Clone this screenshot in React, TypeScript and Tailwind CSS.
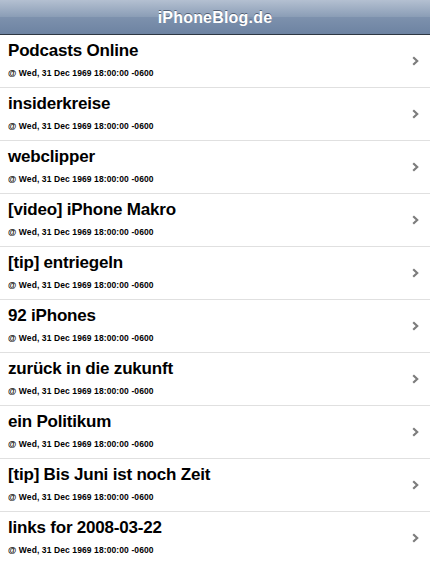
const POSTS = [
  'Podcasts Online',
  'insiderkreise',
  'webclipper',
  '[video] iPhone Makro',
  '[tip] entriegeln',
  '92 iPhones',
  'zurück in die zukunft',
  'ein Politikum',
  '[tip] Bis Juni ist noch Zeit',
  'links for 2008-03-22',
]

const DATE = '@ Wed, 31 Dec 1969 18:00:00 -0600'

function Chevron() {
  return (
    <svg width="7" height="10" viewBox="0 0 7 10" className="shrink-0">
      <path d="M1.2 1.2 L5.2 5 L1.2 8.8" fill="none" stroke="#7d7d7d" strokeWidth="2.2" />
    </svg>
  )
}

export default function App() {
  return (
    <div className="w-[430px] h-[561px] overflow-hidden bg-white font-['Liberation_Sans',Arial,sans-serif]">
      {/* title bar */}
      <div className="h-[35px] pt-[2px] flex items-center justify-center border-b border-[#2d3642] bg-[linear-gradient(#b4c0d1,#8a9db6_50%,#7d91ad_51%,#6d83a2)]">
        <span className="text-white font-bold text-[16px] leading-[20px] tracking-[0.2px] [text-shadow:0_-1px_0_rgba(40,50,70,0.6)]">
          iPhoneBlog.de
        </span>
      </div>

      <ul>
        {POSTS.map(title => (
          <li key={title} className="h-[53px] flex items-center border-b border-[#e0e0e0] pl-2 pr-[11px]">
            <div className="flex-1 min-w-0 self-start pt-[6px]">
              <div className="text-[17px] leading-[20px] font-bold text-black tracking-[-0.2px]">{title}</div>
              <div className="mt-[7px] text-[8.5px] leading-[10px] font-bold text-black tracking-[0.1px]">{DATE}</div>
            </div>
            <Chevron />
          </li>
        ))}
      </ul>
    </div>
  )
}
